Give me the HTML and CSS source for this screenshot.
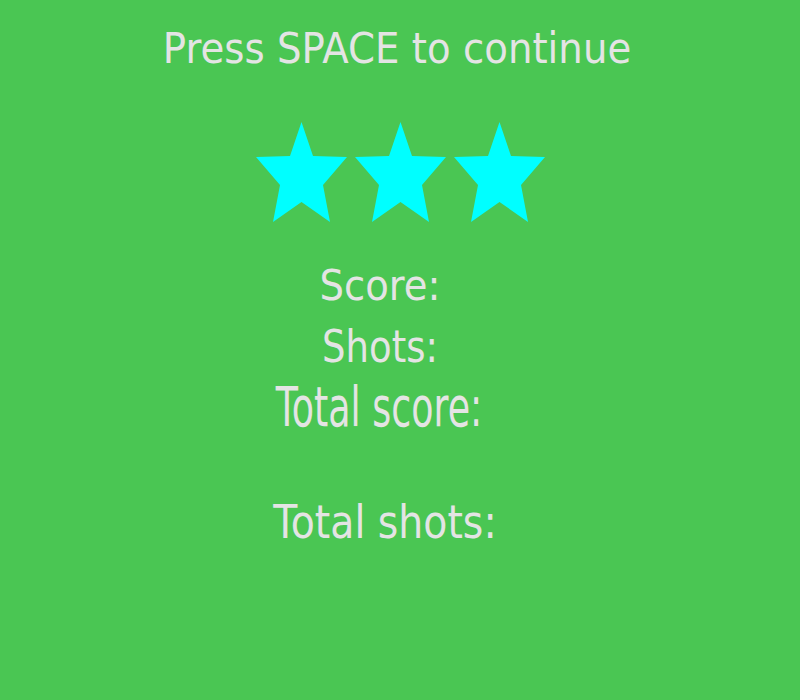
FILE: index.html
```html
<!DOCTYPE html>
<html>
<head>
<meta charset="utf-8">
<link rel="stylesheet" href="styles.css">
</head>
<body>
<div class="screen">
  <div class="line prompt">Press SPACE to continue</div>
  <div class="stars">
    <svg class="star" viewBox="0 0 91 100" width="91" height="100"><polygon points="45.5,0 57,34 91,35 67,63 74,100 45.5,80 17,100 24,63 0,35 34,34"/></svg>
    <svg class="star" viewBox="0 0 91 100" width="91" height="100"><polygon points="45.5,0 57,34 91,35 67,63 74,100 45.5,80 17,100 24,63 0,35 34,34"/></svg>
    <svg class="star" viewBox="0 0 91 100" width="91" height="100"><polygon points="45.5,0 57,34 91,35 67,63 74,100 45.5,80 17,100 24,63 0,35 34,34"/></svg>
  </div>
  <div class="line score">Score:</div>
  <div class="line shots">Shots:</div>
  <div class="line total-score">Total score:</div>
  <div class="line total-shots">Total shots:</div>
</div>
</body>
</html>
```
FILE: styles.css
```css
html, body {
  margin: 0;
  padding: 0;
}
body {
  background: #4ac653;
  width: 800px;
  height: 700px;
  overflow: hidden;
}
.screen {
  display: flex;
  flex-direction: column;
  align-items: center;
  padding-top: 26px;
  font-family: "DejaVu Sans", sans-serif;
  color: #e4e4e4;
}
.line {
  white-space: nowrap;
}
.prompt {
  font-size: 38.7px;
  line-height: 48px;
  height: 48px;
  margin-right: 6px;
  transform-origin: 50% 37.4px;
  transform: scaleY(1.1);
}
.stars {
  display: flex;
  gap: 8px;
  margin-top: 48px;
  height: 100px;
}
.star {
  display: block;
  fill: #00ffff;
}
.score {
  font-size: 38.6px;
  line-height: 44px;
  height: 44px;
  margin-top: 43px;
  margin-right: 40px;
  transform-origin: 50% 35.4px;
  transform: scaleY(1.1);
}
.shots {
  font-size: 37px;
  line-height: 44px;
  height: 44px;
  margin-top: 19px;
  margin-right: 40px;
  transform-origin: 50% 34.8px;
  transform: scaleY(1.2);
}
.total-score {
  font-size: 36.4px;
  line-height: 44px;
  height: 44px;
  margin-top: 20px;
  margin-right: 42px;
  transform-origin: 50% 34.6px;
  transform: scaleY(1.5);
}
.total-shots {
  font-size: 39.4px;
  line-height: 46px;
  height: 46px;
  margin-top: 65px;
  margin-right: 30px;
  transform-origin: 50% 36.6px;
  transform: scaleY(1.15);
}
```
